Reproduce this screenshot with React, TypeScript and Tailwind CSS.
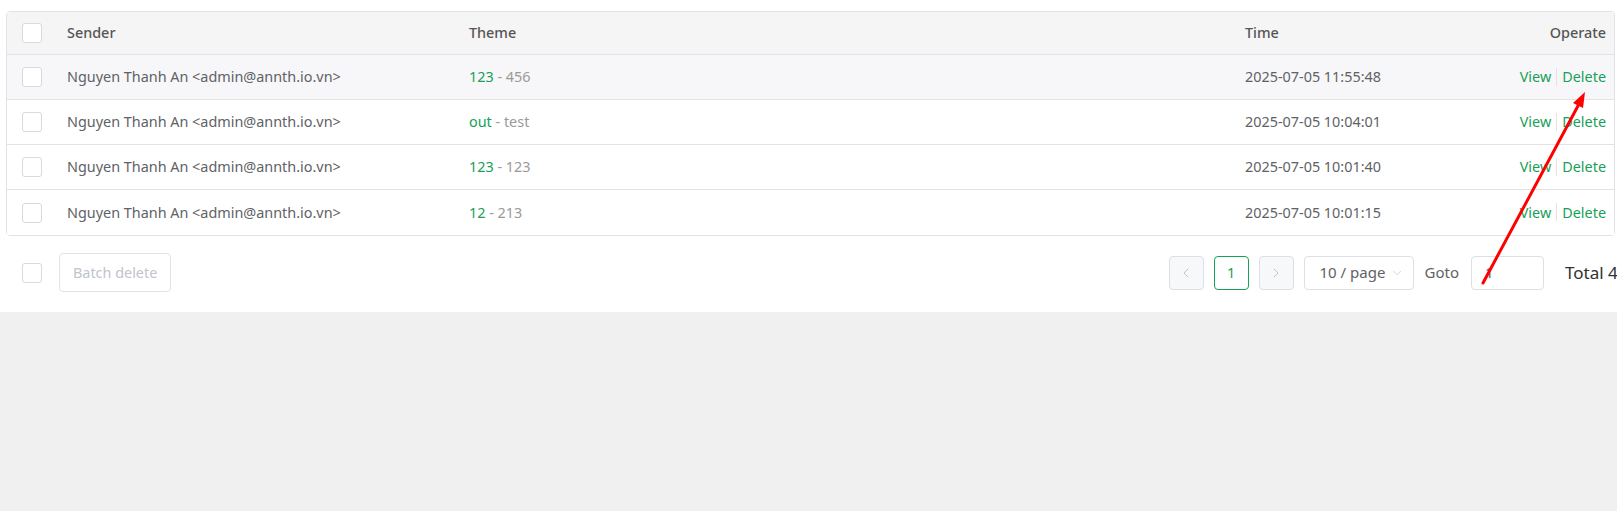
import { ChevronLeft, ChevronRight, ChevronDown } from 'lucide-react';

type Mail = { sender: string, title: string, body: string, time: string };

const mails: Mail[] = [
    { sender: 'Nguyen Thanh An <admin@annth.io.vn>', title: '123', body: '456', time: '2025-07-05 11:55:48' },
    { sender: 'Nguyen Thanh An <admin@annth.io.vn>', title: 'out', body: 'test', time: '2025-07-05 10:04:01' },
    { sender: 'Nguyen Thanh An <admin@annth.io.vn>', title: '123', body: '123', time: '2025-07-05 10:01:40' },
    { sender: 'Nguyen Thanh An <admin@annth.io.vn>', title: '12', body: '213', time: '2025-07-05 10:01:15' },
];

function Checkbox() {
    return <span className="block w-[20px] h-[20px] rounded-[3px] border border-[#d9d9de] bg-white" />;
}

export default function App() {
    return (
        <div className="relative min-h-screen w-full overflow-hidden bg-[#f0f0f0] font-['Noto_Sans',sans-serif] text-[14.4px] text-[#606266]">
            <div className="bg-white pl-[6px] pr-[2px] pt-[11px]">
                <div className="rounded-[4px] border border-[#e3e3e6]">
                    <div className="grid grid-cols-[44px_402px_776px_1fr_auto] items-center h-[43px] bg-[#f5f5f6] border-b border-[#e3e3e6] font-medium text-[#555]">
                        <div className="pl-[15px]"><Checkbox /></div>
                        <div className="pl-[16px]">Sender</div>
                        <div className="pl-[16px]">Theme</div>
                        <div className="pl-[16px]">Time</div>
                        <div className="pr-[8px] text-right">Operate</div>
                    </div>
                    {mails.map((m, i) => (
                        <div
                            key={i}
                            className={`grid grid-cols-[44px_402px_776px_1fr_auto] items-center ${i < mails.length - 1 ? 'h-[45px] border-b border-[#e3e3e6]' : 'h-[45px]'} ${i === 0 ? 'bg-[#f7f7f9]' : 'bg-white'}`}
                        >
                            <div className="pl-[15px]"><Checkbox /></div>
                            <div className="pl-[16px]">{m.sender}</div>
                            <div className="pl-[16px]">
                                <span className="text-[#18a058]">{m.title}</span>
                                <span className="text-[#9a9a9a]"> - {m.body}</span>
                            </div>
                            <div className="pl-[16px]">{m.time}</div>
                            <div className="pr-[8px] flex items-center text-[#18a058]">
                                <span>View</span>
                                <span className="mx-[5px] w-px h-[18px] bg-[#e3e3e6]" />
                                <span>Delete</span>
                            </div>
                        </div>
                    ))}
                </div>

                {/* footer: batch actions + pagination */}
                <div className="flex items-center pl-[16px] pt-[17px] pb-[20px]">
                    <Checkbox />
                    <button className="ml-[17px] h-[39px] px-[13px] rounded-[4px] border border-[#e3e3e6] bg-white text-[#c0c4cc]">Batch delete</button>
                    <div className="ml-auto flex items-center">
                        <button className="w-[35px] h-[34px] flex items-center justify-center rounded-[4px] border border-[#dcdfe6] bg-[#f7f8fa] text-[#c0c4cc]">
                            <ChevronLeft size={16} strokeWidth={1.5} />
                        </button>
                        <button className="ml-[10px] w-[35px] h-[34px] flex items-center justify-center rounded-[4px] border border-[#18a058] bg-white text-[#18a058]">1</button>
                        <button className="ml-[10px] w-[35px] h-[34px] flex items-center justify-center rounded-[4px] border border-[#dcdfe6] bg-[#f7f8fa] text-[#c0c4cc]">
                            <ChevronRight size={16} strokeWidth={1.5} />
                        </button>
                        <div className="ml-[10px] w-[110px] h-[34px] flex items-center pl-[15px] pr-[8px] rounded-[4px] border border-[#dcdfe6] bg-white whitespace-nowrap text-[15px]">
                            <span>10 / page</span>
                            <ChevronDown size={16} strokeWidth={1.2} className="ml-[5px] text-[#c0c4cc]" />
                        </div>
                        <span className="ml-[11px] text-[15px]">Goto</span>
                        <div className="ml-[12px] w-[73px] h-[34px] flex items-center pl-[13px] rounded-[4px] border border-[#dcdfe6] bg-white text-[15px]">1</div>
                        <span className="ml-[21px] w-[50px] whitespace-nowrap text-[17px] text-[#303133]">Total 4</span>
                    </div>
                </div>
            </div>

            {/* annotation arrow */}
            <svg className="absolute inset-0 pointer-events-none" width="1617" height="511">
                <line x1="1483" y1="283" x2="1579" y2="104" stroke="#ff0000" strokeWidth="3" strokeLinecap="round" />
                <polygon points="1585,92 1583,108 1573,103" fill="#ff0000" />
            </svg>
        </div>
    );
}
